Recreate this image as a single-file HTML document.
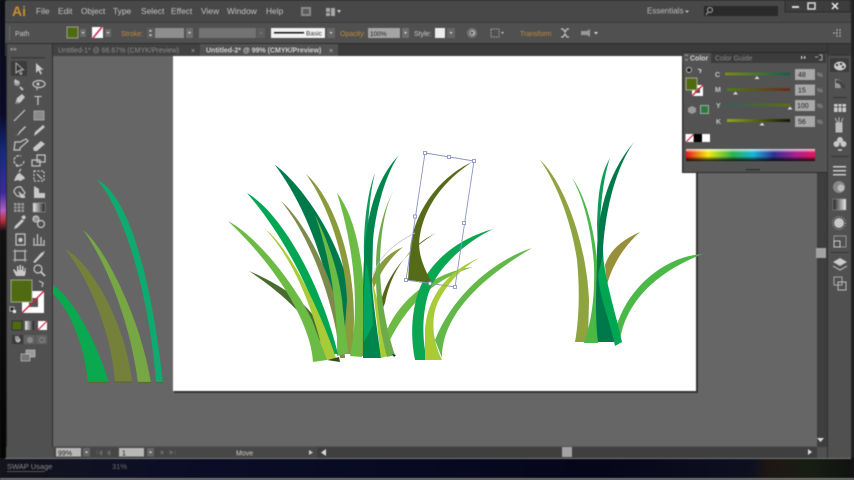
<!DOCTYPE html>
<html><head><meta charset="utf-8"><style>
html,body{margin:0;padding:0;background:#222;width:854px;height:480px;overflow:hidden}
svg{display:block}
text{font-family:"Liberation Sans",sans-serif}
.ui{filter:blur(.45px)}
.m{font-size:8.4px;fill:#c4c4c4}
.c{font-size:7px;fill:#c8c8c8}
.o{font-size:7px;fill:#c08a3a}
.ic{fill:none;stroke:#c8c8c8;stroke-width:1.2}
.if{fill:#c8c8c8}
.g{filter:blur(.35px)}
</style></head><body>
<svg width="854" height="480" viewBox="0 0 854 480" xmlns="http://www.w3.org/2000/svg">
<defs>
<linearGradient id="spec" x1="0" x2="1" y1="0" y2="0">
<stop offset="0" stop-color="#e8141c"/><stop offset=".17" stop-color="#f5ea14"/><stop offset=".36" stop-color="#2db34a"/><stop offset=".52" stop-color="#19b5d8"/><stop offset=".68" stop-color="#2e3192"/><stop offset=".85" stop-color="#a8208e"/><stop offset="1" stop-color="#e6155c"/>
</linearGradient>
<linearGradient id="shade" x1="0" x2="0" y1="0" y2="1">
<stop offset="0" stop-color="#fff" stop-opacity=".85"/><stop offset=".3" stop-color="#fff" stop-opacity="0"/><stop offset=".6" stop-color="#000" stop-opacity="0"/><stop offset="1" stop-color="#000" stop-opacity=".9"/>
</linearGradient>
<linearGradient id="left" x1="0" x2="0" y1="0" y2="1">
<stop offset="0" stop-color="#0a0a14"/><stop offset=".25" stop-color="#0a0a2a"/><stop offset=".33" stop-color="#152a80"/><stop offset=".42" stop-color="#3a2aa0"/><stop offset=".46" stop-color="#b060c0"/><stop offset=".48" stop-color="#c03040"/><stop offset=".505" stop-color="#111"/><stop offset="1" stop-color="#050505"/>
</linearGradient>
<linearGradient id="gr" x1="0" x2="1" y1="0" y2="0"><stop offset="0" stop-color="#eee"/><stop offset="1" stop-color="#222"/></linearGradient>
<linearGradient id="desk" x1="0" x2="1" y1="0" y2="0">
<stop offset="0" stop-color="#14141c"/><stop offset=".2" stop-color="#0c0e28"/><stop offset=".5" stop-color="#070a22"/><stop offset=".7" stop-color="#06061a"/><stop offset=".88" stop-color="#0e1020"/><stop offset=".9" stop-color="#1f1612"/><stop offset=".95" stop-color="#161e12"/><stop offset="1" stop-color="#111"/>
</linearGradient>
<linearGradient id="tc" x1="0" x2="1"><stop offset="0" stop-color="#7a8a18"/><stop offset="1" stop-color="#136048"/></linearGradient>
<linearGradient id="tm" x1="0" x2="1"><stop offset="0" stop-color="#4f7a1a"/><stop offset="1" stop-color="#6a2a1c"/></linearGradient>
<linearGradient id="ty" x1="0" x2="1"><stop offset="0" stop-color="#3c5a60"/><stop offset="1" stop-color="#5a7010"/></linearGradient>
<linearGradient id="tk" x1="0" x2="1"><stop offset="0" stop-color="#90a820"/><stop offset="1" stop-color="#141408"/></linearGradient>
</defs>

<g class="ui">
<!-- base -->
<rect x="0" y="0" width="854" height="480" fill="#3a3a3a"/>
<rect x="0" y="0" width="6" height="458" fill="url(#left)"/>
<rect x="0" y="458" width="854" height="20" fill="url(#desk)"/>
<rect x="0" y="478" width="854" height="2" fill="#777"/>
<rect x="850" y="0" width="4" height="458" fill="#222"/>

<!-- menu bar -->
<rect x="5" y="1" width="846" height="21" fill="#484848"/>
<rect x="5" y="22" width="846" height="22" fill="#505050"/>
<rect x="5" y="22" width="846" height="1" fill="#3a3a3a"/>
<text x="12" y="16" font-size="14" font-weight="bold" fill="#c98f2c">Ai</text>
<text class="m" x="36" y="14">File</text>
<text class="m" x="58" y="14">Edit</text>
<text class="m" x="81" y="14">Object</text>
<text class="m" x="113" y="14">Type</text>
<text class="m" x="141" y="14">Select</text>
<text class="m" x="171" y="14">Effect</text>
<text class="m" x="201" y="14">View</text>
<text class="m" x="227" y="14">Window</text>
<text class="m" x="266" y="14">Help</text>
<rect x="301" y="7" width="10" height="9" fill="#8a8a8a"/><rect x="303" y="9" width="6" height="5" fill="#5a5a5a"/>
<rect x="326" y="8" width="9" height="8" fill="#a8a8a8"/><rect x="330" y="8" width="1" height="8" fill="#484848"/><rect x="326" y="12" width="4" height="1" fill="#484848"/>
<path d="M337 10h4l-2 3z" fill="#ccc"/>
<text x="647" y="13.500" font-size="8" fill="#bdbdbd">Essentials</text>
<path d="M685 10.500h4l-2 2.500z" fill="#bbb"/>
<rect x="704" y="6" width="74" height="10" fill="#2a2a2a"/>
<circle cx="710" cy="10" r="2.500" fill="none" stroke="#aaa"/><path d="M708 12l-2 3" stroke="#aaa"/>
<rect x="785" y="0" width="65" height="12" fill="#3d3d3d" stroke="#2c2c2c"/>
<rect x="792" y="6" width="7" height="2" fill="#ddd"/>
<rect x="808" y="3" width="7" height="6" fill="none" stroke="#ddd" stroke-width="1.500"/>
<path d="M832 3l6 6m0-6l-6 6" stroke="#eee" stroke-width="1.500"/>

<!-- control bar -->
<rect x="9" y="26" width="1" height="14" fill="#6a6a6a"/>
<text class="c" x="15" y="36" font-size="6.500">Path</text>
<rect x="67" y="27" width="11" height="11" fill="#4f6b12" stroke="#bbb" stroke-width=".7"/>
<rect x="80" y="29" width="6" height="8" fill="#6a6a6a"/><path d="M81.500 32h3l-1.500 2z" fill="#ddd"/>
<rect x="92" y="27" width="11" height="11" fill="#fff"/><path d="M93 38l9-11" stroke="#d02040" stroke-width="1.500"/>
<rect x="105" y="29" width="6" height="8" fill="#6a6a6a"/><path d="M106.500 32h3l-1.500 2z" fill="#ddd"/>
<text class="o" x="121" y="36">Stroke:</text>
<rect x="147" y="28" width="7" height="10" fill="#5e5e5e"/><path d="M149 31.500h3l-1.500-2zM149 34.500h3l-1.500 2z" fill="#ddd"/>
<rect x="155" y="28" width="29" height="10" fill="#8e8e8e"/>
<rect x="186" y="28" width="7" height="10" fill="#6e6e6e"/><path d="M188 32h3l-1.500 2z" fill="#ddd"/>
<rect x="199" y="28" width="57" height="10" fill="#737373"/>
<rect x="257" y="28" width="8" height="10" fill="#5e5e5e"/><path d="M260 32.500h2.500l-1.200 1.500z" fill="#888"/>
<rect x="271" y="28" width="54" height="10" fill="#f2f2f2"/>
<rect x="274" y="32" width="30" height="1.500" fill="#111"/>
<text x="306" y="35.500" font-size="6.500" fill="#333">Basic</text>
<rect x="327" y="28" width="8" height="10" fill="#666"/><path d="M329.500 32h3l-1.500 2z" fill="#ddd"/>
<text class="o" x="340" y="36">Opacity:</text>
<rect x="368" y="28" width="32" height="10" fill="#a5a5a5"/>
<text x="370" y="36" font-size="6.500" fill="#222">100%</text>
<rect x="402" y="28" width="7" height="10" fill="#6e6e6e"/><path d="M404 32h3l-1.500 2z" fill="#ddd"/>
<text class="c" x="414" y="36">Style:</text>
<rect x="435" y="28" width="10" height="10" fill="#eee"/>
<rect x="447" y="28" width="8" height="10" fill="#666"/><path d="M449.500 32h3l-1.500 2z" fill="#ddd"/>
<circle cx="472" cy="33" r="5" fill="#777"/><circle cx="472.500" cy="33" r="2.500" fill="#bbb"/><circle cx="472" cy="33" r="1.200" fill="#444"/>
<rect x="491" y="29" width="8" height="8" fill="none" stroke="#aaa" stroke-dasharray="1.500 1"/><path d="M501 32h3l-1.500 2z" fill="#ccc"/>
<text class="o" x="520" y="36">Transform</text>
<path d="M561 29h2l2 3 2-3h2M561 37h2l2-3 2 3h2" class="ic" stroke-width="1"/>
<path d="M581 31h6l3-2v8l-3-2h-6z" fill="#999"/><path d="M594 32h4l-2 2.500z" fill="#ddd"/>
<path d="M833 33h4M837 29v8M840 29v8" stroke="#bbb" stroke-width="1" stroke-dasharray="2 1" fill="none"/>

<!-- tab bar -->
<rect x="5" y="44" width="846" height="12" fill="#3b3b3b"/>
<rect x="5" y="43" width="846" height="1" fill="#2e2e2e"/>
<rect x="53" y="44" width="147" height="12" fill="#424242"/>
<rect x="200" y="44" width="138" height="12" fill="#525252"/>
<text x="58" y="52.500" font-size="7" fill="#8e8e8e">Untitled-1* @ 66.67% (CMYK/Preview)</text>
<text x="191" y="53" font-size="7" fill="#a8a8a8">×</text>
<text x="206" y="52.500" font-size="7" font-weight="bold" fill="#d2d2d2">Untitled-2* @ 99% (CMYK/Preview)</text>
<text x="329" y="53" font-size="7" fill="#c0c0c0">×</text>

<!-- canvas -->
<rect x="53" y="56" width="764" height="391" fill="#666"/>
<rect x="52" y="44" width="1" height="414" fill="#2e2e2e"/>
<rect x="174" y="57" width="524" height="336" fill="#333"/>
<rect x="173" y="56" width="523" height="335" fill="#fff"/>

<!-- toolbar -->
<rect x="6" y="44" width="46" height="414" fill="#505050"/>
<rect x="6" y="44" width="1" height="414" fill="#2a2a2a"/>
<text x="10" y="51" font-size="6" fill="#ccc">««</text>
<rect x="11" y="57" width="34" height="1.500" fill="#3a3a3a"/>
<rect x="11" y="61" width="16" height="15" fill="#3c3c3c"/>
<path d="M16 63l0 10 2.500-2.500 2 4 1.500-.7-2-4h3.500z" fill="#333" stroke="#ccc" stroke-width=".8"/>
<path d="M36 63l0 10 2.500-2.500 2 4 1.500-.7-2-4h3.500z" class="if"/>
<path d="M20 87l3 3" stroke="#ccc" stroke-width="1.800"/><path d="M15 79l4 3-1 2-4-2zM19 84l1 2" class="if"/><circle cx="17" cy="83" r="3" fill="#bbb" opacity=".7"/>
<ellipse cx="39" cy="84" rx="6" ry="3.500" class="ic"/><circle cx="38" cy="84" r="1.500" class="if"/><path d="M37 87v3" class="ic"/>
<path d="M15 105l2-7 5-4 3 3-4 5z" class="if"/><path d="M15 105l3-3" stroke="#555"/>
<text x="34" y="105" font-size="13" fill="#ccc" font-family="Liberation Serif">T</text>
<path d="M14 121l11-11" class="ic"/>
<rect x="34" y="111" width="10" height="9" fill="#8a8a8a" stroke="#bbb" stroke-width=".7"/>
<path d="M13 136c4 0 5-1 6-4l6-6 1 1-6 6c-1 2-3 3-7 3z" class="if"/>
<path d="M34 136l1-4 8-7 2 2-8 7z" class="if"/>
<path d="M14 150l1-8h5l6-3 2 2-8 7v2z" class="ic"/>
<path d="M33 148l8-7 4 3-8 7h-3z" class="if"/>
<path d="M24 161a5 5 0 1 1-3-5M16 166h4" class="ic" stroke-dasharray="3 1"/>
<rect x="32" y="160" width="8" height="6" class="ic"/><rect x="37" y="155" width="8" height="7" class="ic"/>
<path d="M14 181c2-6 4-8 6-8 2 3 4 2 5 6-3 0-3 2-5 2-2-2-4 0-6 0z" class="if"/><path d="M19 172l2-3" class="ic"/>
<rect x="34" y="171" width="10" height="10" class="ic" stroke-dasharray="2 1.500"/><path d="M37 174l5 5" class="ic"/>
<path d="M14 192c0-4 4-6 7-5l4 6-3 4-5-1z" class="ic"/><path d="M18 191l7 5v2h-4z" class="if"/>
<path d="M34 186l5 3v9h-5zM39 193h6v5h-6z" class="if"/>
<rect x="14" y="203" width="10" height="9" fill="#999"/><path d="M14 206h10M14 209h10M17 203v9M21 203v9" stroke="#444" stroke-width=".8"/>
<rect x="33" y="203" width="12" height="9" fill="url(#gr)" stroke="#999" stroke-width=".6"/>
<path d="M14 229l1-3 7-7 2 2-7 7z" class="if"/><path d="M21 217l3-2 2 2-2 3z" class="if"/>
<circle cx="36" cy="219" r="3" class="ic"/><circle cx="41" cy="224" r="3.500" class="ic"/><rect x="33" y="216" width="5" height="5" class="if" opacity=".6"/>
<rect x="16" y="234" width="9" height="11" class="ic"/><circle cx="20.500" cy="240" r="2.200" class="if"/>
<path d="M34 244v-6M37.500 244v-10M41 244v-7M44 244v-4M33 245h12" class="ic" stroke-width="1.400"/>
<rect x="15" y="251" width="10" height="9" class="ic"/><path d="M13 251h14M13 260h14M15 249v13M25 249v13" stroke="#bbb" stroke-width=".7"/>
<path d="M33 262l8-9 4-2-2 4-8 8z" class="if"/>
<path d="M16 276l-3-6 1-1 3 3v-6h1.500v4h1v-5h1.500v5h1v-4h1.500v5h1v-3h1.200v5l-1 3z" class="if"/>
<circle cx="38" cy="269" r="4" class="ic"/><path d="M41 272l4 4" stroke="#ccc" stroke-width="1.800"/>

<!-- fill/stroke -->
<rect x="22" y="291" width="22" height="22" fill="#fff"/>
<rect x="29" y="298" width="9" height="9" fill="#555"/>
<rect x="11" y="280" width="21" height="22" fill="#4f6b12" stroke="#b5b5a5" stroke-width=".8"/>
<path d="M22 313l22-22" stroke="#d8203c" stroke-width="1.400"/>
<path d="M39 281l4 2-1 4" class="ic" stroke-width=".9"/>
<rect x="10" y="307" width="4" height="4" fill="#222" stroke="#ddd" stroke-width=".7"/><rect x="13" y="310" width="3" height="3" fill="#eee"/>
<rect x="12" y="321" width="10" height="9" fill="#4f6b12" stroke="#333"/>
<rect x="25" y="321" width="9" height="9" fill="url(#gr)"/>
<rect x="38" y="321" width="9" height="9" fill="#fff"/><path d="M38 330l9-9" stroke="#d8203c" stroke-width="1.200"/>
<rect x="12" y="335" width="11" height="9" fill="#3a3a3a"/>
<rect x="24" y="335" width="11" height="9" fill="#636363"/>
<rect x="36" y="335" width="11" height="9" fill="#636363"/>
<circle cx="18" cy="340" r="2.500" fill="#bbb"/><rect x="15" y="336" width="4" height="4" fill="#999"/>
<circle cx="30" cy="340" r="3" fill="#888"/><circle cx="42" cy="340" r="2.500" fill="none" stroke="#888"/>
<rect x="26" y="350" width="9" height="7" fill="#999" stroke="#ccc" stroke-width=".6"/>
<rect x="21" y="354" width="9" height="7" fill="#777" stroke="#ccc" stroke-width=".6"/>

<!-- status bar -->
<rect x="6" y="447" width="811" height="11" fill="#505050"/>
<rect x="53" y="447" width="764" height="11" fill="#474747"/>
<rect x="53" y="446" width="764" height="1" fill="#555"/>
<rect x="5" y="458" width="846" height="1" fill="#777"/>
<rect x="56" y="448" width="25" height="8.500" fill="#b8b8b8"/>
<text x="58" y="455.500" font-size="7" fill="#222">99%</text>
<rect x="83" y="448" width="7" height="8.500" fill="#666"/><path d="M85 451.500h3l-1.500 2z" fill="#ddd"/>
<path d="M97 450v5M99 452.500l3-2v5zM107 452.500l3-2v5z" fill="#6c6c6c" stroke="#6c6c6c" stroke-width=".5"/>
<rect x="119" y="448" width="25" height="8.500" fill="#b8b8b8"/>
<text x="122" y="455.500" font-size="7" fill="#222">1</text>
<rect x="147" y="448" width="7" height="8.500" fill="#666"/><path d="M149 451.500h3l-1.500 2z" fill="#ddd"/>
<path d="M161 450.500l3 2-3 2zM170 450.500l3 2-3 2zM175 450v5" fill="#6c6c6c" stroke="#6c6c6c" stroke-width=".5"/>
<text x="236" y="455.500" font-size="7" fill="#ccc">Move</text>
<path d="M309 450l4 2.500-4 2.500z" fill="#ccc"/>
<rect x="317" y="447" width="10" height="11" fill="#3e3e3e"/>
<path d="M326 449v7l-5-3.500z" fill="#ddd"/>
<rect x="327" y="447" width="490" height="11" fill="#3f3f3f"/>
<rect x="562" y="447" width="10" height="10" fill="#a3a3a3"/>
<path d="M808 449l4 3-4 3z" fill="#ddd"/>

<!-- right scrollbar & dock -->
<rect x="817" y="56" width="34" height="402" fill="#505050"/>
<rect x="817" y="172" width="10" height="275" fill="#3e3e3e"/>
<rect x="816" y="248" width="10" height="10" fill="#a3a3a3"/>
<path d="M817 438h7l-3.500 4z" fill="#ddd"/>
<rect x="827" y="44" width="1" height="414" fill="#2f2f2f"/>
<rect x="817" y="447" width="10" height="11" fill="#505050"/>
<rect x="833" y="54" width="14" height="1" fill="#333"/>
<rect x="830" y="58" width="19" height="14" fill="#3c3c3c"/>
<ellipse cx="840" cy="66" rx="6" ry="4.500" fill="#ccc"/><circle cx="837" cy="65" r="1.200" fill="#444"/><circle cx="841" cy="64" r="1.200" fill="#444"/><circle cx="843" cy="67" r="1.200" fill="#444"/>
<path d="M835 88v-9c5 0 10 4 11 9z" fill="#999"/><path d="M836 80c5 0 9 3 10 8h-5c0-3-2-5-5-5z" fill="#444"/>
<rect x="833" y="97" width="14" height="1" fill="#333"/>
<rect x="834" y="104" width="12" height="8" fill="#ccc"/><path d="M834 107h12M838 104v8M842 104v8" stroke="#444" stroke-width=".8"/>
<path d="M836 123h6v9h-6zM835 118l3 5M839 117v6M843 118l-2 5" fill="#bbb" stroke="#bbb"/>
<circle cx="840" cy="140" r="3" class="if"/><circle cx="836.500" cy="144" r="3" class="if"/><circle cx="843.500" cy="144" r="3" class="if"/><path d="M838 150h4" stroke="#ccc" stroke-width="1.500"/>
<rect x="831" y="156" width="18" height="1" fill="#333"/>
<rect x="833" y="166" width="13" height="1.500" fill="#ccc"/><rect x="833" y="170" width="13" height="1.500" fill="#ccc"/><rect x="833" y="174" width="13" height="1.500" fill="#ccc"/>
<circle cx="839" cy="187" r="6" fill="#888"/><circle cx="841" cy="188" r="3.500" fill="#bbb"/>
<rect x="833" y="199" width="13" height="11" fill="url(#gr)" stroke="#999" stroke-width=".5" transform="rotate(180 839.500 204.500)"/>
<circle cx="839" cy="223" r="5" class="if"/><circle cx="839" cy="223" r="6.500" fill="none" stroke="#aaa" stroke-dasharray="1 1.500"/>
<rect x="834" y="236" width="12" height="11" fill="none" stroke="#aaa" stroke-width=".8"/><rect x="834" y="241" width="6" height="6" fill="none" stroke="#ccc"/>
<rect x="831" y="252" width="18" height="1" fill="#333"/>
<path d="M840 258l7 4-7 4-7-4z" fill="#ccc"/><path d="M833 266l7 4 7-4-7 4z" stroke="#ccc" fill="#ccc"/>
<rect x="834" y="277" width="8" height="8" fill="none" stroke="#aaa"/><rect x="838" y="282" width="8" height="8" fill="none" stroke="#bbb"/>

<!-- desktop text -->
<text x="7" y="469" font-size="7.500" fill="#8a8a8a">SWAP Usage</text>
<rect x="7" y="471" width="38" height="1" fill="#555"/>
<text x="112" y="469" font-size="7.500" fill="#6c6c6c">31%</text>
</g>

<g class="g">
<!-- left blades on pasteboard -->
<path d="M97 180C125 192 150 265 163 383L156 383C151 310 128 215 97 180Z" fill="#0eaa6f"/>
<path d="M83 230C103 245 140 315 151 383L138 383C130 320 105 260 83 230Z" fill="#77a644"/>
<path d="M65 249C90 262 125 320 132 382L115 382C112 335 90 280 65 249Z" fill="#75813b"/>
<path d="M53 285C75 300 98 345 109 383L88 383C85 350 72 312 53 294Z" fill="#0aa84f"/>
<path d="M156 382.500h7M138 382.500h13M115 382h17M88 382.500h21" stroke="#5c6a30" stroke-width="1.200" fill="none"/>

<!-- middle cluster -->
<path d="M275 165C300 183 337 235 348 285L352 335L338 335C330 280 312 215 275 165Z" fill="#00794a"/>
<path d="M281 201C305 222 333 275 343 330L345 358L340 358L336 330C326 280 305 230 281 201Z" fill="#7e8a4c"/>
<path d="M306 174C330 195 354 250 354 320L353 354L343 354L347 300C345 255 328 205 306 174Z" fill="#8c9a3e"/>
<path d="M315 215C325 235 340 270 343 310L348 353L337 356C338 320 333 265 315 215Z" fill="#6cbb45"/>
<path d="M249 271C275 282 305 300 316 320L322 345C310 320 285 295 249 271Z" fill="#4a6b30"/>
<path d="M247 193C280 212 320 280 338 354L329 354C322 315 292 245 247 193Z" fill="#00a651"/>
<path d="M265 229C290 248 320 310 336 358L325 360C315 315 295 260 265 229Z" fill="#a9cb37"/>
<path d="M228 221C258 237 295 285 312 320L327 360L313 362C312 335 290 280 228 221Z" fill="#6cbb45"/>
<path d="M327 360L339 357L340 362Z" fill="#3a4a20"/>
<path d="M364 290L363 356L352 356L358 330C361 315 362 300 364 290Z" fill="#8c9a3e"/>
<path d="M337 193C352 212 363 250 364 300L362 357L350 356C358 320 358 260 337 193Z" fill="#6cbb45"/>
<path d="M403 247C388 253 376 265 372 280L373 290C380 272 390 258 403 247Z" fill="#8c9a3e"/>
<path d="M436 233C415 243 392 265 385 303L378 320C380 285 400 255 436 233Z" fill="#55651b"/>
<path d="M375 173C368 190 363 225 364 260L366 290C367 240 368 200 375 173Z" fill="#0f9a5c"/>
<path d="M399 155C388 170 376 205 373 240L372 285C374 310 378 335 381 358L363 358L363 300C363 245 366 190 399 155Z" fill="#00864c"/>
<path d="M366 262C363 300 363 320 364 342L373 325C372 300 370 280 366 262Z" fill="#00a35f"/>
<path d="M372 280L380 310L388 356L381 358C378 330 374 300 372 280Z" fill="#a9cb37"/>
<path d="M395 188C385 205 380 235 380 265C380 300 388 335 395 355L387 357C381 335 375 300 376 265C376 235 385 205 395 188Z" fill="#6bab4a"/>
<path d="M392 354L396 355L394 357Z" fill="#222"/>
<path d="M473 267C445 270 405 290 387 330L390 340C405 310 430 280 473 267Z" fill="#6cbb45"/>
<path d="M532 248C500 258 455 290 435 340L442 358C442 330 458 292 532 248Z" fill="#62b848"/>
<path d="M493 229C460 238 425 262 416 300C411 320 411 340 415 360L427 360C422 340 422 315 428 295C435 272 460 245 493 229Z" fill="#0aa651"/>
<path d="M479 258C455 268 428 290 425 330L425 360L442 360C432 340 430 315 440 298C450 280 465 266 479 258Z" fill="#a9cb37"/>
<path d="M472 162C440 177 414 210 410 250L408 280L432 283C422 265 417 250 420 235C425 205 445 180 472 162Z" fill="#556b1a"/>
<path d="M415 233C395 243 380 255 373 275" fill="none" stroke="#c4c4cc" stroke-width=".7"/>

<!-- selection box -->
<path d="M425 153L474 161L455 287L406 280Z" fill="none" stroke="#8a94c8" stroke-width=".9"/>
<g fill="#fff" stroke="#7f8ac4" stroke-width=".8">
<rect x="423.500" y="151.500" width="3" height="3"/><rect x="447.500" y="155.500" width="3" height="3"/><rect x="472.500" y="159.500" width="3" height="3"/>
<rect x="413.500" y="215" width="3" height="3"/><rect x="462.500" y="221.500" width="3" height="3"/>
<rect x="404.500" y="278.500" width="3" height="3"/><rect x="428.500" y="282" width="3" height="3"/><rect x="453.500" y="285.500" width="3" height="3"/>
</g>

<!-- right cluster -->
<path d="M640 232C622 240 610 250 605 265L607 285C612 265 625 245 640 232Z" fill="#978f3a"/>
<path d="M540 160C560 178 586 235 589 300L588 342L575 342C579 320 580 290 577 260C572 225 558 185 540 160Z" fill="#8fa33f"/>
<path d="M703 254C665 256 628 288 617 325L620 342C622 318 640 278 703 254Z" fill="#4cb848"/>
<path d="M572 178C585 195 598 235 598 285L598 343L584 343C592 320 595 295 594 265C592 235 585 200 572 178Z" fill="#4cb848"/>
<path d="M610 158C600 175 598 195 597 225L598 255L600 225C601 200 604 175 610 158Z" fill="#0f9a5c"/>
<path d="M635 141C620 160 606 200 603 250C604 285 610 315 615 342L598 342C595 320 596 290 597 265C596 225 603 178 635 141Z" fill="#00794a"/>
<path d="M603 255C606 285 615 310 622 342L615 346C610 320 600 300 598 275Z" fill="#00a651"/>
</g>

<!-- colour panel -->
<g class="ui">
<rect x="682" y="52" width="145" height="120" fill="#535353"/>
<rect x="682" y="52" width="145" height="1" fill="#2a2a2a"/>
<rect x="682" y="172" width="145" height="1" fill="#2c2c2c"/>
<rect x="682" y="52" width="1.500" height="120" fill="#303030"/>
<rect x="683" y="53" width="143" height="10" fill="#3c3c3c"/>
<rect x="683" y="53" width="28" height="10" fill="#535353"/>
<text x="690" y="60.500" font-size="7" font-weight="bold" fill="#d4d4d4">Color</text>
<text x="715" y="60.500" font-size="7" fill="#8a8a8a">Color Guide</text>
<path d="M685 56l1.500-1.500 1.500 1.500M685 59l1.500 1.500 1.500-1.500" stroke="#bbb" fill="none" stroke-width=".6"/>
<path d="M801 55.500l2 2-2 2zM804 55.500l2 2-2 2z" fill="#ccc"/>
<path d="M815 57h3M819 55h3v5h-3" stroke="#aaa" fill="none"/>
<circle cx="689" cy="70" r="2.500" fill="#222" stroke="#ddd" stroke-width=".7"/>
<path d="M698 69l3 1-1 3" class="ic" stroke-width=".8"/>
<rect x="692" y="85" width="11" height="11" fill="#fff"/>
<rect x="695" y="88" width="5" height="5" fill="#555"/>
<rect x="686" y="78" width="11" height="12" fill="#4f6b12" stroke="#c8c8a8" stroke-width=".7"/>
<path d="M692 96l11-11" stroke="#d8203c" stroke-width="1.300"/>
<path d="M692 106l4 2v4l-4 2-4-2v-4z" fill="#999"/>
<rect x="700.500" y="105.500" width="8" height="8" fill="#2e7a3c" stroke="#ccc" stroke-width=".7"/>
<text class="c" x="715" y="77" font-weight="bold" fill="#bbb">C</text>
<text class="c" x="715" y="92" font-weight="bold" fill="#bbb">M</text>
<text class="c" x="716" y="108" font-weight="bold" fill="#bbb">Y</text>
<text class="c" x="716" y="124" font-weight="bold" fill="#bbb">K</text>
<rect x="725" y="72.500" width="65" height="3" fill="url(#tc)"/>
<rect x="727" y="88" width="63" height="3" fill="url(#tm)"/>
<rect x="727" y="103.500" width="63" height="3" fill="url(#ty)"/>
<rect x="727" y="119" width="63" height="3" fill="url(#tk)"/>
<path d="M757 76l2.500 3h-5zM735.500 91.500l2.500 3h-5zM790 106.500l2.500 3h-5zM762 122.500l2.500 3h-5z" fill="#ddd"/>
<g fill="#a8a8a8">
<rect x="795" y="69" width="20" height="11"/><rect x="795" y="84.500" width="20" height="11"/><rect x="795" y="100" width="20" height="11"/><rect x="795" y="116" width="20" height="11"/>
</g>
<g font-size="7" fill="#222">
<text x="798" y="77">48</text><text x="798" y="92.500">15</text><text x="797" y="108">100</text><text x="798" y="124">56</text>
</g>
<g font-size="6.500" fill="#aaa">
<text x="817" y="77">%</text><text x="817" y="92.500">%</text><text x="817" y="108">%</text><text x="817" y="124">%</text>
</g>
<rect x="685.500" y="134" width="8" height="8" fill="#fff"/><path d="M686 142l8-8" stroke="#d8203c" stroke-width="1.200"/>
<rect x="694" y="134" width="8" height="8" fill="#000"/>
<rect x="702" y="134" width="8" height="8" fill="#fff"/>
<rect x="686" y="149" width="129" height="12" fill="url(#spec)"/>
<rect x="686" y="149" width="129" height="12" fill="url(#shade)"/>
<rect x="746" y="169" width="14" height="1.500" fill="#333"/>
</g>
</svg>
</body></html>
